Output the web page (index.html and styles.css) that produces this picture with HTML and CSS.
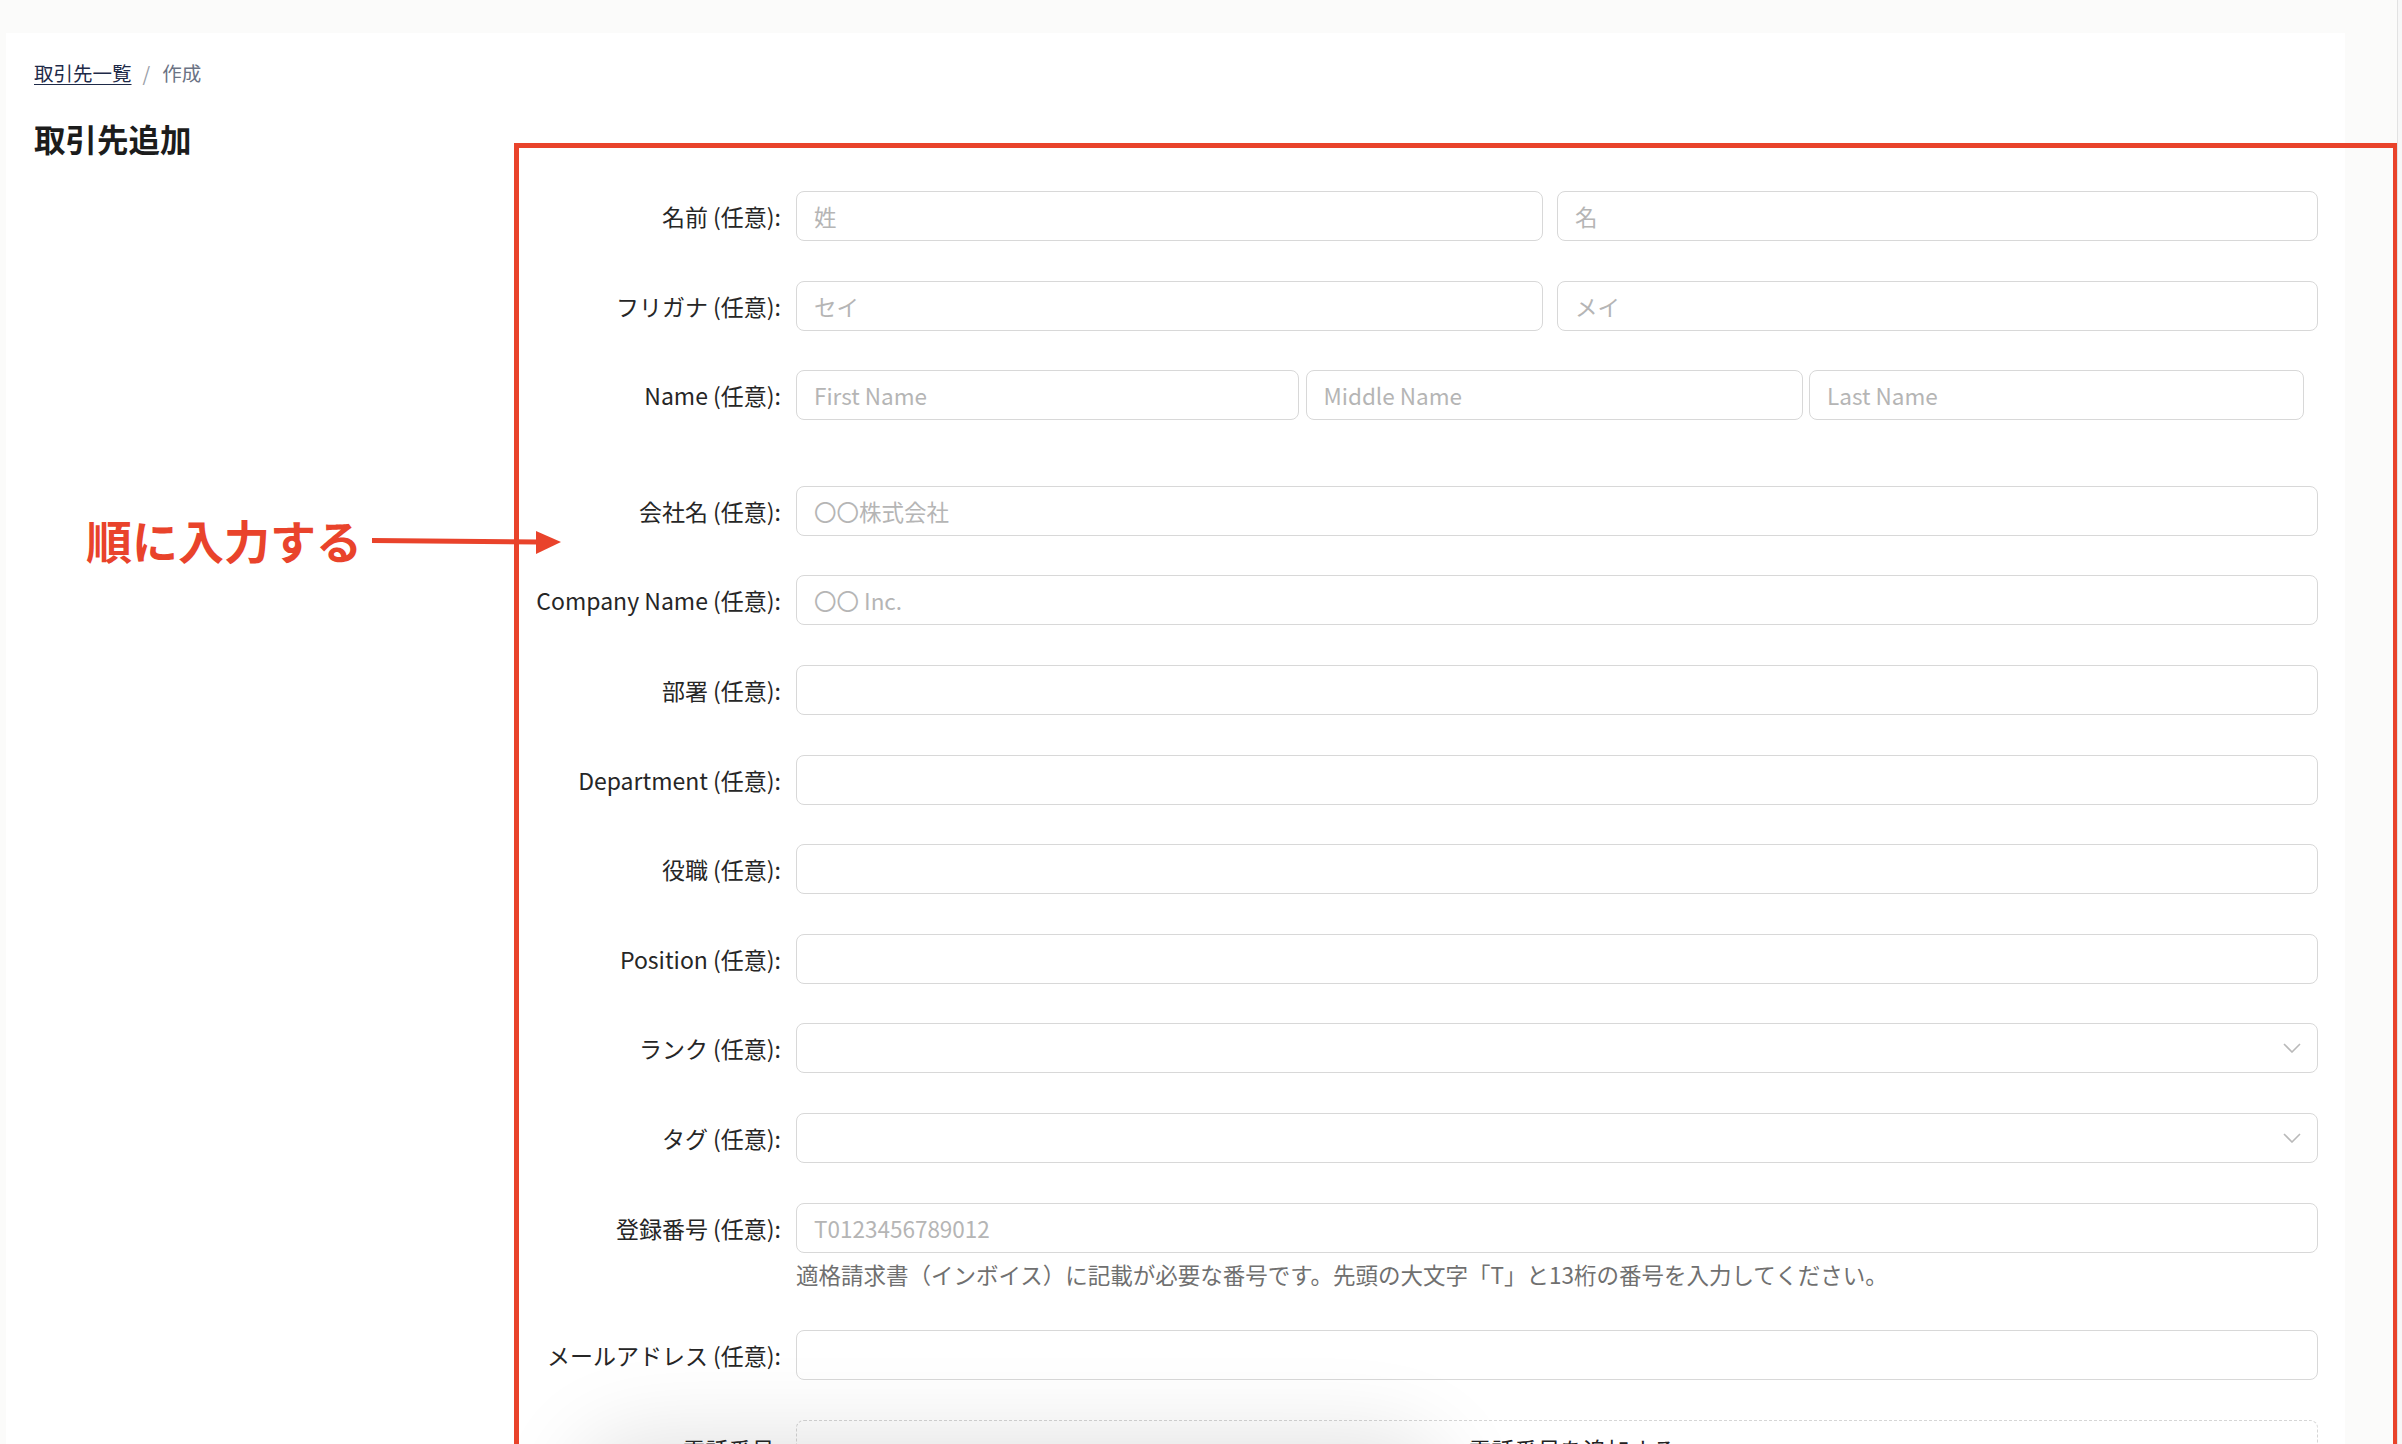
FILE: index.html
```html
<!DOCTYPE html>
<html lang="ja">
<head>
    <meta charset="UTF-8">
    <meta name="viewport" content="width=device-width, initial-scale=1.0">
    <title>取引先追加</title>
    <link rel="stylesheet" href="styles.css">
</head>
<body>
    <div class="topbar"></div>
    <main class="page">
        <nav class="breadcrumb">
            <a href="#">取引先一覧</a><span class="sep">/</span><span class="current">作成</span>
        </nav>
        <h1 class="title">取引先追加</h1>

        <form class="form">
            <div class="row">
                <label class="label">名前 (任意):</label>
                <div class="fields two">
                    <input type="text" placeholder="姓">
                    <input type="text" placeholder="名">
                </div>
            </div>
            <div class="row">
                <label class="label">フリガナ (任意):</label>
                <div class="fields two">
                    <input type="text" placeholder="セイ">
                    <input type="text" placeholder="メイ">
                </div>
            </div>
            <div class="row row-wide">
                <label class="label">Name (任意):</label>
                <div class="fields three">
                    <input type="text" placeholder="First Name">
                    <input type="text" placeholder="Middle Name">
                    <input type="text" placeholder="Last Name">
                </div>
            </div>
            <div class="row">
                <label class="label">会社名 (任意):</label>
                <div class="fields"><input type="text" placeholder="〇〇株式会社"></div>
            </div>
            <div class="row">
                <label class="label">Company Name (任意):</label>
                <div class="fields"><input type="text" placeholder="〇〇 Inc."></div>
            </div>
            <div class="row">
                <label class="label">部署 (任意):</label>
                <div class="fields"><input type="text"></div>
            </div>
            <div class="row">
                <label class="label">Department (任意):</label>
                <div class="fields"><input type="text"></div>
            </div>
            <div class="row">
                <label class="label">役職 (任意):</label>
                <div class="fields"><input type="text"></div>
            </div>
            <div class="row">
                <label class="label">Position (任意):</label>
                <div class="fields"><input type="text"></div>
            </div>
            <div class="row">
                <label class="label">ランク (任意):</label>
                <div class="fields select">
                    <select></select>
                    <svg class="chevron" width="18" height="10" viewBox="0 0 18 10"><path d="M1 1 L9 9 L17 1" fill="none" stroke="#b9b9b9" stroke-width="1.6"/></svg>
                </div>
            </div>
            <div class="row">
                <label class="label">タグ (任意):</label>
                <div class="fields select">
                    <select></select>
                    <svg class="chevron" width="18" height="10" viewBox="0 0 18 10"><path d="M1 1 L9 9 L17 1" fill="none" stroke="#b9b9b9" stroke-width="1.6"/></svg>
                </div>
            </div>
            <div class="row">
                <label class="label">登録番号 (任意):</label>
                <div class="fields">
                    <input type="text" placeholder="T0123456789012">
                    <p class="help">適格請求書（インボイス）に記載が必要な番号です。先頭の大文字「T」と13桁の番号を入力してください。</p>
                </div>
            </div>
            <div class="row">
                <label class="label">メールアドレス (任意):</label>
                <div class="fields"><input type="email"></div>
            </div>
            <div class="row">
                <label class="label label-phone">電話番号:</label>
                <div class="fields">
                    <button type="button" class="add-phone"><span class="plus">+</span>電話番号を追加する</button>
                </div>
            </div>
        </form>
    </main>

    <!-- annotation overlay -->
    <div class="note-box"></div>
    <div class="note-text">順に入力する</div>
    <svg class="note-arrow" width="192" height="32" viewBox="0 0 192 32">
        <path d="M0 13.5 L166 15" stroke="#e9432b" stroke-width="5" fill="none"/>
        <polygon points="164,4 189,15 164,27" fill="#e9432b"/>
    </svg>

    <div class="scrollbar"></div>
    <div class="toast-shadow"></div>
</body>
</html>
```

FILE: styles.css
```css
html, body {
    margin: 0;
    height: 100%;
    overflow: hidden;
    background-color: #fbfbfa;
    font-family: "Noto Sans CJK JP", "Noto Sans", sans-serif;
    color: #222;
}

.topbar {
    height: 33px;
}

.page {
    width: 2339px;
    margin-left: 6px;
    min-height: 1411px;
    box-sizing: border-box;
    padding: 25px 27px 0 28px;
    background-color: #fff;
}

.breadcrumb {
    font-size: 19.5px;
    line-height: 30px;
}

.breadcrumb a {
    color: #1e2a48;
    text-decoration: underline;
    text-underline-offset: 3px;
}

.breadcrumb .sep {
    margin: 0 12px 0 11px;
    color: #9aa0a8;
}

.breadcrumb .current {
    color: #6b7384;
}

.title {
    margin: 28px 0 0;
    font-size: 31.5px;
    line-height: 44px;
    font-weight: 700;
    color: #1c1c1c;
}

.form {
    margin-top: 31px;
    display: flex;
    flex-direction: column;
    gap: 39.6px;
}

.row {
    display: grid;
    grid-template-columns: 747px 1522px;
    column-gap: 15px;
    align-items: start;
}

.row-wide {
    margin-bottom: 26px;
}

.label {
    height: 50px;
    display: flex;
    align-items: center;
    justify-content: flex-end;
    font-size: 23px;
    white-space: nowrap;
    color: #262626;
}

.label-phone {
    height: 58px;
}

.fields {
    display: grid;
}

.fields.two {
    grid-template-columns: 747px 761px;
    column-gap: 14px;
}

.fields.three {
    grid-template-columns: 503px 497px 495px;
    column-gap: 6.5px;
}

input, select {
    height: 50px;
    width: 100%;
    box-sizing: border-box;
    padding: 0 17px;
    border: 1px solid #d8d8d8;
    border-radius: 8px;
    background-color: #fff;
    font-family: inherit;
    font-size: 22.5px;
    color: #222;
    outline: none;
}

input::placeholder {
    color: #b5b5b5;
}

select {
    appearance: none;
    -webkit-appearance: none;
}

.select {
    position: relative;
}

.chevron {
    position: absolute;
    right: 17px;
    top: 20px;
}

.help {
    margin: 4px 0 0;
    font-size: 22.5px;
    line-height: 34px;
    color: #707070;
    white-space: nowrap;
}

.add-phone {
    height: 58px;
    width: 100%;
    padding: 0;
    border: 1px dashed #d6d6d6;
    border-radius: 8px;
    background-color: #fff;
    font-family: inherit;
    font-size: 23px;
    color: #222;
    text-align: center;
}

.add-phone .plus {
    margin-right: 17px;
}

/* annotation */
.note-box {
    position: absolute;
    left: 514px;
    top: 143px;
    width: 1884px;
    height: 1400px;
    box-sizing: border-box;
    border: 5.5px solid #e9432b;
    pointer-events: none;
}

.note-text {
    position: absolute;
    left: 86px;
    top: 515px;
    font-size: 46px;
    line-height: 48px;
    font-weight: 700;
    color: #e9432b;
    white-space: nowrap;
}

.note-arrow {
    position: absolute;
    left: 372px;
    top: 527px;
}

.scrollbar {
    position: fixed;
    top: 0;
    right: 0;
    width: 4px;
    height: 100%;
    border-left: 1px solid #e2e2e2;
    background-color: #f7f7f7;
}

.toast-shadow {
    position: fixed;
    left: 620px;
    top: 1480px;
    width: 780px;
    height: 120px;
    border-radius: 20px;
    background-color: #fff;
    box-shadow: 0 0 90px 40px rgba(0, 0, 0, 0.13);
}
```
